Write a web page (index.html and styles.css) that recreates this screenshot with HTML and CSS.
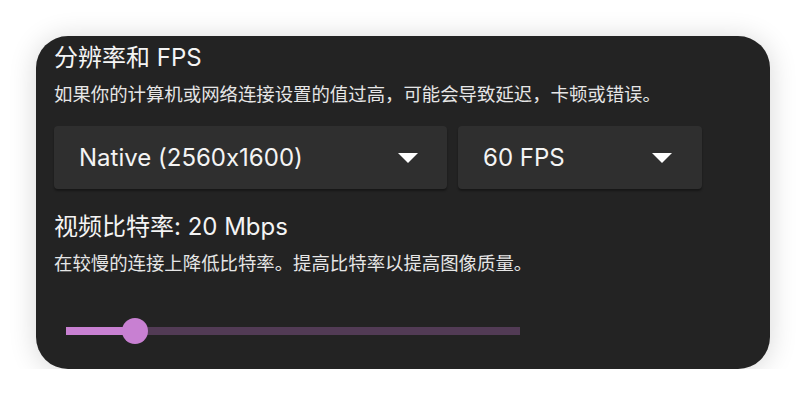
FILE: index.html
```html
<!DOCTYPE html>
<html lang="zh-CN">
<head>
<meta charset="utf-8">
<title>分辨率和 FPS</title>
<link rel="stylesheet" href="styles.css">
</head>
<body>
<div class="card">
  <h2 class="title">分辨率和 FPS</h2>
  <p class="desc">如果你的计算机或网络连接设置的值过高，可能会导致延迟，卡顿或错误。</p>
  <div class="row">
    <div class="select select-res">
      <span class="value">Native (2560x1600)</span>
      <svg class="arrow" width="20" height="10" viewBox="0 0 20 10"><polygon points="0,0 20,0 10,10" fill="#ffffff"/></svg>
    </div>
    <div class="select select-fps">
      <span class="value">60 FPS</span>
      <svg class="arrow" width="20" height="10" viewBox="0 0 20 10"><polygon points="0,0 20,0 10,10" fill="#ffffff"/></svg>
    </div>
  </div>
  <h2 class="title title-2">视频比特率: 20 Mbps</h2>
  <p class="desc">在较慢的连接上降低比特率。提高比特率以提高图像质量。</p>
  <div class="slider">
    <div class="track">
      <div class="fill" style="width: 69px"></div>
      <div class="thumb" style="left: 69px"></div>
    </div>
  </div>
</div>
</body>
</html>
```

FILE: styles.css
```css
* { box-sizing: border-box; }

html, body {
  margin: 0;
  padding: 0;
  background: #ffffff;
}

body {
  font-family: "Inter", "Noto Sans CJK SC", sans-serif;
  font-feature-settings: "calt" 0;
  text-spacing-trim: space-all;
  color: #f4f4f4;
}

.card {
  margin: 36px 0 0 36px;
  width: 734px;
  height: 333px;
  padding: 7px 18px 0 18px;
  background: #232323;
  border-radius: 32px;
  box-shadow: 0 2px 28px rgba(0, 0, 0, 0.16);
}

.title {
  margin: 0;
  font-size: 24px;
  font-weight: 400;
  line-height: 30px;
  color: #f4f4f4;
}

.title-2 {
  margin-top: 23px;
}

.desc {
  margin: 8px 0 0 0;
  font-size: 18.4px;
  line-height: 26px;
  color: #e6e6e6;
}

.row {
  display: flex;
  gap: 11px;
  margin-top: 19px;
}

.select {
  height: 63px;
  display: flex;
  align-items: center;
  justify-content: space-between;
  padding: 0 29px 0 25px;
  background: #2f2f2f;
  border-radius: 4px;
  box-shadow: 0 2px 2px rgba(0, 0, 0, 0.35);
}

.select-res { width: 393px; }
.select-fps { width: 244px; padding-right: 30px; }

.value {
  font-size: 24px;
  line-height: 30px;
  color: #f4f4f4;
}

.arrow { display: block; }

.slider {
  margin: 42px 0 0 12px;
  width: 454px;
  height: 26px;
  display: flex;
  align-items: center;
}

.track {
  position: relative;
  width: 100%;
  height: 8px;
  background: #523b55;
}

.fill {
  height: 100%;
  background: #c880d2;
}

.thumb {
  position: absolute;
  top: 50%;
  width: 26px;
  height: 26px;
  margin: -13px 0 0 -13px;
  border-radius: 50%;
  background: #c880d2;
}
```
